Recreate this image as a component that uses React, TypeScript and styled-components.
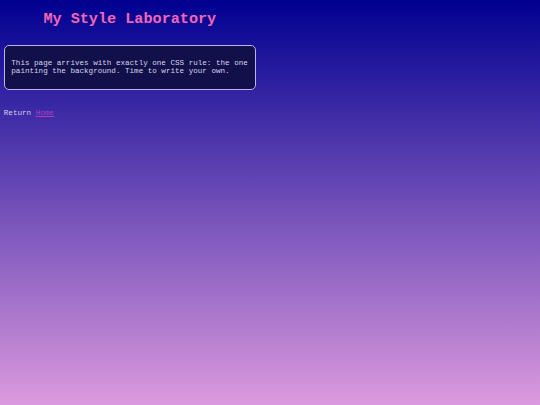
import styled, { createGlobalStyle } from "styled-components";

const GlobalStyle = createGlobalStyle`
  html, body {
    margin: 0;
    min-height: 100%;
  }
  body {
    min-height: 405px;
    padding: 3.8px;
    box-sizing: border-box;
    background: linear-gradient(to bottom, #000090 0%, #dc9ade 100%);
    font-family: "Liberation Mono", "Courier New", monospace;
    font-size: 7.58px;
    color: #e4e0f4;
  }
`;

const Page = styled.div`
  display: flex;
  flex-direction: column;
  width: 252px;
`;

const Title = styled.h1`
  margin: 5px 0 0;
  text-align: center;
  font-size: 15.16px;
  line-height: 20px;
  font-weight: bold;
  color: #f266b8;
`;

const Note = styled.div`
  margin-top: 16px;
  padding: 13px 6.5px;
  border: 1px solid #b9b2ec;
  border-radius: 5px;
  background: #12104a;
  line-height: 8.6px;
  color: #d6d4ea;
`;

const Footer = styled.p`
  margin: 18px 0 0;
  line-height: 10px;
  color: #d8d2ee;
`;

const HomeLink = styled.a`
  color: #b03cbc;
  text-decoration: underline;
`;

export default function App() {
  return (
    <>
      <GlobalStyle />
      <Page>
        <Title>My Style Laboratory</Title>
        <Note>
          This page arrives with exactly one CSS rule: the one painting the
          background. Time to write your own.
        </Note>
        <Footer>
          Return <HomeLink href="#">Home</HomeLink>
        </Footer>
      </Page>
    </>
  );
}
